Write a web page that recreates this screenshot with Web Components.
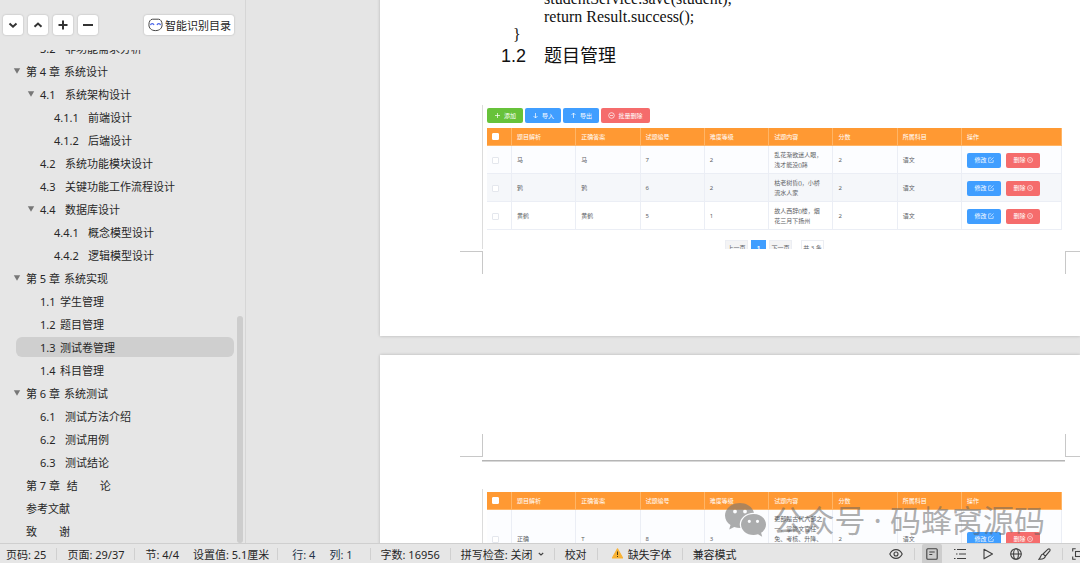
<!DOCTYPE html>
<html lang="zh-CN">
<head>
<meta charset="utf-8">
<title>文档编辑器</title>
<style>
html,body{margin:0;height:100%;overflow:hidden}
body{font-family:"Noto Sans","Noto Sans CJK SC",sans-serif;font-size:11px;color:#262626;background:#e6e6e6}
</style>
</head>
<body>
<writer-app></writer-app>

<script>
const define = (name, html, setup) => {
  const t = document.createElement('template');
  t.innerHTML = html;
  customElements.define(name, class extends HTMLElement {
    connectedCallback() {
      if (this.shadowRoot) return;
      this.attachShadow({ mode: 'open' }).append(t.content.cloneNode(true));
      if (setup) setup(this, this.shadowRoot);
    }
  });
};

/* ---------- outline panel ---------- */
define('outline-item', `
<style>
:host{display:block;flex:none;height:23px;padding:0 3px 0 16px;box-sizing:border-box}
a{display:flex;align-items:center;height:20px;margin-top:1px;border-radius:6px;color:#262626;text-decoration:none;white-space:pre;line-height:20px}
span{padding-top:1px}
:host([current]) a{background:#cfcfcf}
svg{flex:none;width:10px;height:8px;margin-left:-4px;margin-right:4px;visibility:hidden}
:host([open]) svg{visibility:visible}
:host([level="2"]) a{padding-left:14px}
:host([level="3"]) a{padding-left:28px}
.n{flex:none;min-width:38px}
:host([level="2"]) .n{min-width:25px}
:host([level="2"][tight]) .n{min-width:20px}
:host([level="3"]) .n{min-width:34px}
:host([plain]) .n{display:none}
</style>
<a href="#"><svg viewBox="0 0 10 8"><path d="M1.8 1.2h6.4L5 6.8z" fill="#777"/></svg><span class="n"></span><span><slot></slot></span></a>`,
(el, r) => {
  r.querySelector('.n').textContent = el.getAttribute('num') || '';
  if (el.hasAttribute('current')) r.querySelector('a').setAttribute('aria-current', 'true');
});

define('outline-panel', `
<style>
:host{display:flex;flex-direction:column;flex:none;width:245px;border-right:1px solid #d6d6d6;background:#e6e6e6;min-height:0}
header{display:flex;align-items:center;gap:5px;height:20px;padding:15px 11px 15px 3px}
button{display:flex;align-items:center;justify-content:center;width:20px;height:20px;padding:0;border:0;border-radius:3px;background:#fff;box-shadow:0 0 2px rgba(0,0,0,.25);font:inherit;color:#262626}
button.wide{width:auto;margin-left:auto;padding:0 3px 0 4px;gap:2px}
svg{display:block;fill:none;stroke:#333;stroke-width:2}
.view{display:flex;flex:1;min-height:0}
nav{display:flex;flex-direction:column;justify-content:flex-end;flex:1;overflow:hidden}
.bar{display:flex;flex-direction:column;justify-content:flex-end;width:6px;margin-right:2px}
.thumb{height:46%;border-radius:3px;background:#cdcdcd}
</style>
<header>
<button aria-label="展开"><svg width="10" height="10"><path d="M1.5 3.5 5 6.7 8.5 3.5"/></svg></button>
<button aria-label="收起"><svg width="10" height="10"><path d="M1.5 6.7 5 3.5 8.5 6.7"/></svg></button>
<button aria-label="增加"><svg width="10" height="10"><path d="M5 .5v9M.5 5h9"/></svg></button>
<button aria-label="减少"><svg width="12" height="10"><path d="M1 5h10"/></svg></button>
<button class="wide"><svg width="15" height="14" style="stroke-width:1"><path d="M4.500 1.200h6c2.200 0 3.600 2.400 3.600 5.600s-2.200 5.800-6.600 5.800S.9 10 .9 6.800 2.300 1.200 4.500 1.200z" stroke="#444"/><path d="M2.500 7.200q.3-1.500 1.700-1.500t1.800 1.300M9 7q.4-1.300 1.800-1.300t1.700 1.500" stroke="#4662e8" stroke-width="1.200"/></svg><span>智能识别目录</span></button>
</header>
<div class="view">
<nav aria-label="目录">
<outline-item level="2" num="3.2">非功能需求分析</outline-item>
<outline-item open num="第 4 章">系统设计</outline-item>
<outline-item level="2" open num="4.1">系统架构设计</outline-item>
<outline-item level="3" num="4.1.1">前端设计</outline-item>
<outline-item level="3" num="4.1.2">后端设计</outline-item>
<outline-item level="2" num="4.2">系统功能模块设计</outline-item>
<outline-item level="2" num="4.3">关键功能工作流程设计</outline-item>
<outline-item level="2" open num="4.4">数据库设计</outline-item>
<outline-item level="3" num="4.4.1">概念模型设计</outline-item>
<outline-item level="3" num="4.4.2">逻辑模型设计</outline-item>
<outline-item open num="第 5 章">系统实现</outline-item>
<outline-item level="2" tight num="1.1">学生管理</outline-item>
<outline-item level="2" tight num="1.2">题目管理</outline-item>
<outline-item level="2" tight current num="1.3">测试卷管理</outline-item>
<outline-item level="2" tight num="1.4">科目管理</outline-item>
<outline-item open num="第 6 章">系统测试</outline-item>
<outline-item level="2" num="6.1">测试方法介绍</outline-item>
<outline-item level="2" num="6.2">测试用例</outline-item>
<outline-item level="2" num="6.3">测试结论</outline-item>
<outline-item num="第 7 章"> 结　　论</outline-item>
<outline-item plain>参考文献</outline-item>
<outline-item plain>致　　谢</outline-item>
</nav>
<div class="bar"><div class="thumb"></div></div>
</div>`);

/* ---------- embedded question table ---------- */
const HEAD = ['题目解析', '正确答案', '试题编号', '难度等级', '试题内容', '分数', '所属科目', '操作'];
const SETS = {
  list: [
    ['马', '马', '7', '2', '乱花渐欲迷人眼，浅才能没()蹄', '2', '语文'],
    ['鸦', '鸦', '6', '2', '枯老树昏()，小桥流水人家', '2', '语文'],
    ['黄鹤', '黄鹤', '5', '1', '故人西辞()楼，烟花三月下扬州', '2', '语文']
  ],
  next: [['正确', 'T', '8', '3', '吏部是古代六部之<br>一，掌管文官任<br>免、考核、升降、<br>勋封、调动等事务<br>的部门', '2', '语文']]
};
define('question-table', `
<style>
:host{display:block;font-size:6px;line-height:10px;color:#606266}
table{width:100%;table-layout:fixed;border-collapse:separate;border-spacing:0}
th,td{padding:4px 6px 3px 5px;border-right:1px solid #ebeef5;border-bottom:1px solid #ebeef5;text-align:left;font-weight:400;box-sizing:border-box}
th{height:18px;padding:0 6px 0 5px;background:#ff9933;color:#fff;border-color:#ffb566}
tbody tr:nth-child(odd){background:#fcfdff}
tbody tr:nth-child(even){background:#f5f7fa}
tbody tr:nth-child(3){background:#fff}
.c{width:25px}.o{width:100px}
td:nth-child(6){padding-right:8px}
input{appearance:none;display:block;width:7px;height:7px;margin:0;border:1px solid #e4e7ed;border-radius:1px;background:#fff}
th input{border-color:#fff}
.ops{display:flex;gap:5px}
button{display:flex;align-items:center;justify-content:center;gap:1px;width:34px;height:15px;padding:0;border:0;border-radius:2px;background:#409eff;color:#fff;font:inherit}
button.d{background:#f56c6c}
svg{width:6px;height:6px;fill:none;stroke:#fff;stroke-width:.6}
</style>
<table><thead><tr></tr></thead><tbody></tbody></table>`,
(el, r) => {
  r.querySelector('thead tr').innerHTML = '<th class="c"><input type="checkbox" aria-label="全选"></th>' +
    HEAD.map((h, i) => `<th${i === 7 ? ' class="o"' : ''}>${h}</th>`).join('');
  r.querySelector('tbody').innerHTML = SETS[el.getAttribute('set')].map(row =>
    '<tr><td><input type="checkbox" aria-label="选择"></td>' + row.map(c => `<td>${c}</td>`).join('') +
    `<td><div class="ops"><button>修改<svg viewBox="0 0 6 6"><path d="M5.200 3v2.400H.7V.9h2.600M2.500 3.600 5.500.5"/></svg></button><button class="d">删除<svg viewBox="0 0 6 6"><circle cx="3" cy="3" r="2.500"/><path d="M1.800 3h2.400"/></svg></button></div></td></tr>`).join('');
});

define('table-tools', `
<style>
:host{display:flex;gap:2px;font-size:6px;margin-bottom:5px}
button{display:flex;align-items:center;justify-content:center;gap:3px;width:36px;height:15px;padding:0;border:0;border-radius:2px;background:#409eff;color:#fff;font:inherit}
.add{background:#67c23a}.del{background:#f56c6c;width:49px}
svg{width:7px;height:7px;fill:none;stroke:#fff;stroke-width:.7}
</style>
<button class="add"><svg><path d="M3.500 1v5M1 3.500h5"/></svg>添加</button>
<button><svg><path d="M3.500 1v5M1.500 4l2 2 2-2"/></svg>导入</button>
<button><svg><path d="M3.500 6V1M1.500 3l2-2 2 2"/></svg>导出</button>
<button class="del"><svg><circle cx="3.500" cy="3.500" r="2.800"/><path d="M2 3.500h3"/></svg>批量删除</button>`);

define('table-pager', `
<style>
:host{display:flex;justify-content:center;gap:3px;margin-top:10px;font-size:6px;color:#606266}
button,span{display:block;box-sizing:border-box;width:23px;height:16px;padding:0;border:1px solid #eceef3;background:#f4f4f5;font:inherit;line-height:14px;text-align:center;color:inherit}
.on{width:15px;background:#409eff;border-color:#409eff;color:#fff;font-weight:700}
span{background:#fff;margin-left:6px}
</style>
<button>上一页</button><button class="on">1</button><button>下一页</button><span>共 3 条</span>`);

/* ---------- paper ---------- */
define('crop-marks', `
<style>
:host{display:flex;justify-content:space-between;height:23px;padding-left:80px}
i{box-sizing:border-box;width:23px;border:0 solid #c8c8c8;border-right-width:1px;border-top-width:1px}
i+i{width:15px;border-right-width:0;border-left-width:1px}
:host([top]) i{border-top-width:0;border-bottom-width:1px}
</style><i></i><i></i>`);

define('doc-figure', `
<style>
:host{display:block;margin:0 15px 0 102px;padding:3px 3px 0 4px;border-left:1px solid #dcdcdc;overflow:hidden}
</style><slot></slot>`);

define('doc-page', `
<style>
:host{display:block;flex:none;background:#fff;box-shadow:0 0 3px rgba(0,0,0,.22)}
</style><slot></slot>`);

define('doc-canvas', `
<style>
:host{display:flex;flex-direction:column;gap:19px;flex:1;min-width:0;overflow:hidden;padding-left:134px;background:#e5e5e5}
.first{margin-top:-10px;padding-bottom:62px}
.second{padding:79px 0 60px}
pre{margin:0 0 0 133px;font:16px/18px "Liberation Serif",serif;color:#111}
pre span{display:block;padding-left:31px}
h2{display:flex;gap:18px;margin:0 0 38px 121px;padding-top:1px;font:400 18px/22px "Liberation Sans","Noto Sans CJK SC",sans-serif;color:#111}
h2 span{flex:none}
.shot{height:141px;margin-bottom:2px}
.rule{height:1px;margin:3px 15px 27px 102px;border-top:1px solid #b5b5b5;background:#d8d8d8}
</style>
<doc-page class="first">
<pre><span>studentService.save(student);</span><span>return Result.success();</span>}</pre>
<h2><span>1.2</span><span>题目管理</span></h2>
<doc-figure class="shot"><table-tools></table-tools><question-table set="list"></question-table><table-pager></table-pager></doc-figure>
<crop-marks></crop-marks>
</doc-page>
<doc-page class="second">
<crop-marks top></crop-marks>
<div class="rule"></div>
<doc-figure><question-table set="next"></question-table></doc-figure>
</doc-page>`);

define('water-mark', `
<style>
:host{position:absolute;right:35px;bottom:1px;display:flex;align-items:center;gap:7px;height:44px;color:rgba(95,95,95,.5);font:400 31px/44px "Noto Sans","Noto Sans CJK SC",sans-serif;white-space:pre;pointer-events:none}
svg{width:41px;height:34px;fill:#777;opacity:.6}
</style>
<svg viewBox="0 0 41 34"><path fill-rule="evenodd" d="M15 0C6.500 0 0 5.600 0 12.500c0 4 2.200 7.300 5.500 9.500L4.200 26.500l5-2.500c1.900.6 3.900.9 6.200.9-2.800-8 4.200-15.300 13.600-15.200C27.500 4 21.800 0 15 0zM10 6.600a1.900 1.900 0 1 1 0 3.800 1.900 1.900 0 0 1 0-3.800zm10 0a1.900 1.900 0 1 1 0 3.800 1.900 1.900 0 0 1 0-3.800z"/><path fill-rule="evenodd" d="M28.500 11C21.500 11 16 15.700 16 21.500S21.500 32 28.500 32c1.600 0 3.100-.3 4.500-.7l4.200 2.400-1.100-3.900c3-2 4.900-4.900 4.900-8.300C41 15.700 35.500 11 28.500 11zm-4.200 5.700a1.600 1.600 0 1 1 0 3.200 1.600 1.600 0 0 1 0-3.200zm8.200 0a1.600 1.600 0 1 1 0 3.200 1.600 1.600 0 0 1 0-3.200z"/></svg><span>公众号 · 码蜂窝源码</span>`);

/* ---------- status bar ---------- */
define('status-bar', `
<style>
:host{display:flex;align-items:center;flex:none;height:20px;box-sizing:border-box;border-top:1px solid #cfcfcf;background:#e6e6e6;padding-left:6px;overflow:hidden;white-space:nowrap;color:#262626}
.g{display:flex;align-items:center;gap:14px}
.g+.g::before{content:"";width:1px;height:12px;background:#d0d0d0;margin:0 -4px 0 10px}
.g.b{color:#24344a;padding-right:7px}
.g.b::before{margin-left:8px;margin-right:0}
.g.w::before{margin-right:0}
button{display:flex;align-items:center;gap:5px;padding:0;border:0;background:none;font:inherit;color:inherit}
.r{display:flex;align-items:center;margin-left:auto;height:20px;margin-right:-8px}
.r button{width:20px;height:20px;justify-content:center;margin-left:8px}
.r .on{background:#cdcdcd;border-radius:2px}
.r i{width:1px;height:12px;background:#d0d0d0;margin-left:8px}
.r i+button{margin-left:7px}
.r .last{margin-left:5px}
svg{display:block;flex:none;fill:none;stroke:#404040;stroke-width:1.100}
</style>
<div class="g"><span>页码: 25</span></div>
<div class="g"><span>页面: 29/37</span></div>
<div class="g"><span>节: 4/4</span><span>设置值: 5.1厘米</span></div>
<div class="g b"><span>行: 4</span><span>列: 1</span></div>
<div class="g"><span>字数: 16956</span></div>
<div class="g"><button>拼写检查: 关闭 <svg width="6" height="6"><path d="M.8 2 3 4 5.200 2"/></svg></button></div>
<div class="g"><button>校对</button></div>
<div class="g w"><button><svg width="11" height="11" style="stroke:none"><path d="M5.500.8 10.700 10H.3z" fill="#f9b233" stroke="#f9b233" stroke-linejoin="round"/><path d="M5 3.500h1v3.500H5zM5 8h1v1H5z" fill="#4a3a10"/></svg>缺失字体</button></div>
<div class="g"><button>兼容模式</button></div>
<div class="r">
<button aria-label="护眼模式"><svg width="14" height="12"><path d="M.8 6C3.500.2 10.500.2 13.200 6 10.500 11.800 3.500 11.800.8 6z"/><circle cx="7" cy="6" r="2"/></svg></button>
<i></i>
<button class="on" aria-label="页面视图"><svg width="12" height="12"><rect x=".8" y=".8" width="10.400" height="10.400" rx="1"/><path d="M3.300 4h5.400M3.300 6.500h3"/></svg></button>
<button aria-label="大纲"><svg width="12" height="12"><path d="M3 1.500h9M5 6h7M3 10.500h9M0 1.500h1.500M2 6h1.500M0 10.500h1.500"/></svg></button>
<button aria-label="播放"><svg width="12" height="12"><path d="M2 1.200 10.500 6 2 10.800z" stroke-linejoin="round"/></svg></button>
<button aria-label="网页视图"><svg width="12" height="12"><circle cx="6" cy="6" r="5.300"/><ellipse cx="6" cy="6" rx="2.400" ry="5.300"/><path d="M.7 6h10.600"/></svg></button>
<button aria-label="批注"><svg width="13" height="12"><path d="M5 6 10 1.200q1-.7 1.700 0t.1 1.700L7.400 8.200zM5 6C2.500 6.200 3 9.500 1 11.200c3.500.2 6-.6 6.400-3"/></svg></button>
<i></i>
<button class="last" aria-label="适应窗口"><svg width="12" height="12"><path d="M.7 3.500V.7h3M8.300.7h3v2.800M.7 8.500v2.800h3M8.300 11.300h3V8.500"/><rect x="3.500" y="3.500" width="5" height="5"/></svg></button>
</div>`);

define('writer-app', `
<style>
:host{display:flex;flex-direction:column;height:100vh}
main{position:relative;display:flex;flex:1;min-height:0}
</style>
<main><outline-panel></outline-panel><doc-canvas></doc-canvas><water-mark></water-mark></main>
<status-bar></status-bar>`);
</script>
</body>
</html>
